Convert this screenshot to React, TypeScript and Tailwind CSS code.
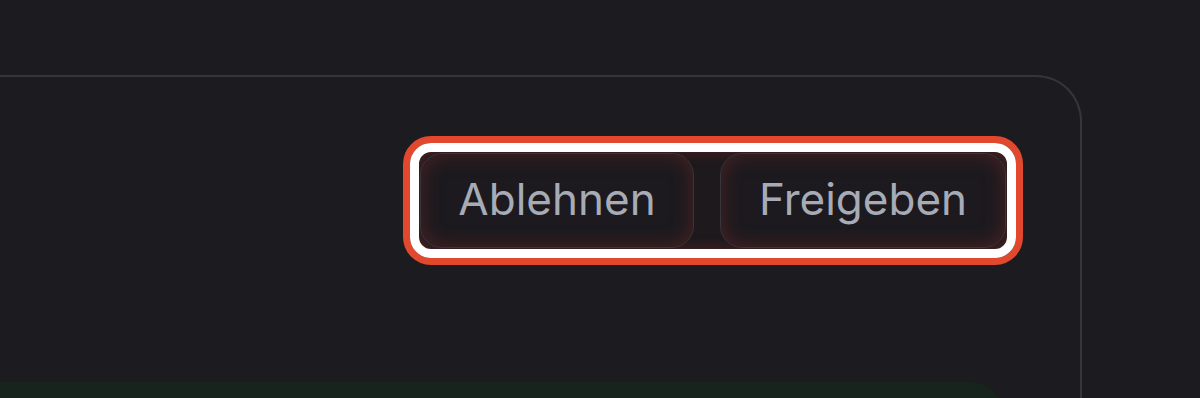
import React from "react";

export default function App() {
  return (
    <div className="h-[398px] w-[1200px] overflow-hidden bg-[#1c1b1f] font-['Inter',sans-serif]">
      <div className="pt-[75px]">
        <div className="-ml-[40px] h-[400px] w-[1122px] rounded-tr-[46px] border-t-[2px] border-r-[2px] border-[#36353b]">
          <div className="flex justify-end pr-[57px] pt-[59px]">
            <div className="rounded-[28px] border-[7px] border-[#e2482d]">
              <div className="flex gap-[26px] rounded-[21px] border-[9px] border-white bg-[#1d191c] p-[1px] shadow-[inset_0_0_14px_rgba(120,40,40,0.6)]">
                <button className="flex h-[95px] w-[274px] items-center justify-center rounded-[22px] border border-[#38363b] bg-[#1c1a1e] pb-[4px] text-[44px] leading-none text-[#a6abb6] shadow-[inset_0_0_20px_rgba(115,40,40,0.55)]">
                  Ablehnen
                </button>
                <button className="flex h-[95px] w-[286px] items-center justify-center rounded-[22px] border border-[#38363b] bg-[#1c1a1e] pb-[4px] text-[44px] leading-none text-[#a6abb6] shadow-[inset_0_0_20px_rgba(115,40,40,0.55)]">
                  Freigeben
                </button>
              </div>
            </div>
          </div>
          <div className="mt-[117px] mr-[78px] h-[40px] rounded-tr-[30px] bg-[#17241e]" />
        </div>
      </div>
    </div>
  );
}
